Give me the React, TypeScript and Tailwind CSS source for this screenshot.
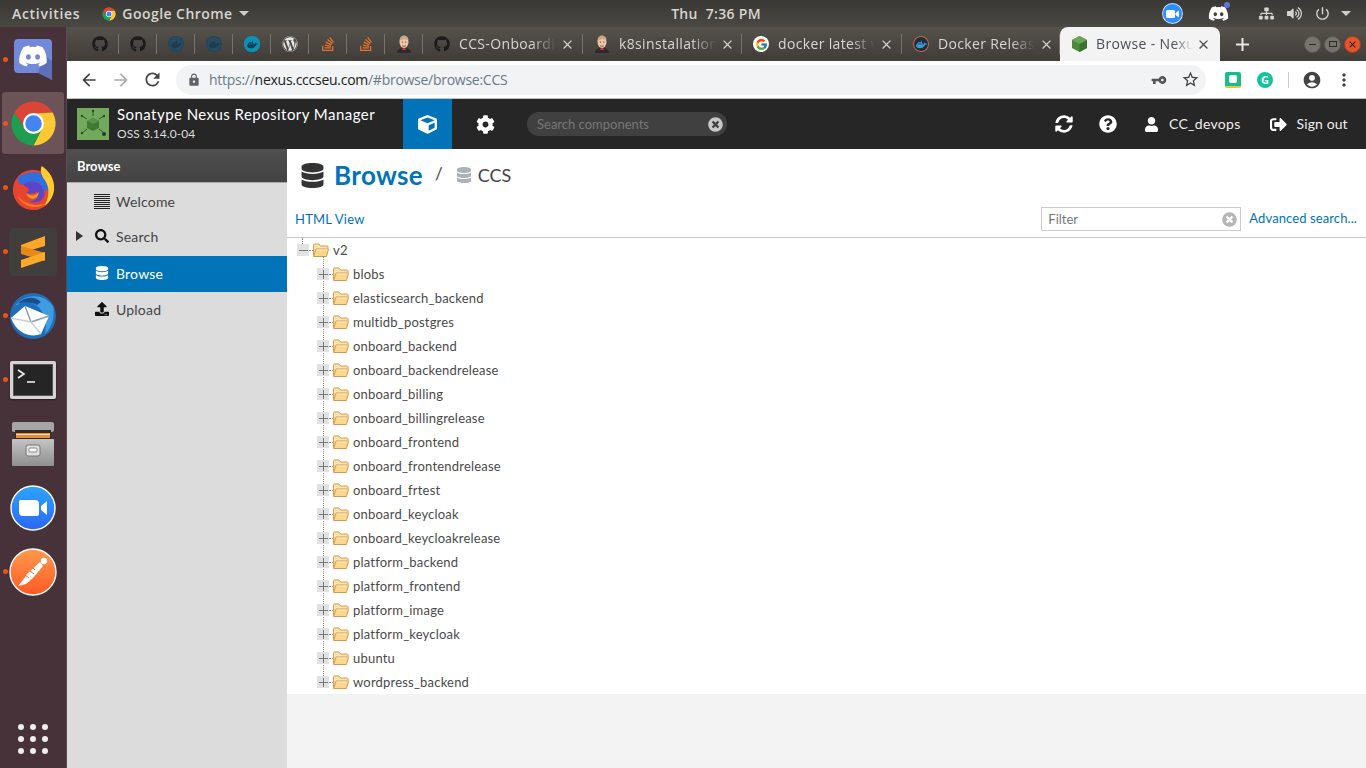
import type { ReactNode } from 'react'
import {
  FaCog,
  FaCube,
  FaDatabase,
  FaDiscord,
  FaDocker,
  FaGithub,
  FaQuestionCircle,
  FaSearch,
  FaSignOutAlt,
  FaSitemap,
  FaStackOverflow,
  FaSyncAlt,
  FaTimesCircle,
  FaUpload,
  FaUser,
  FaVolumeUp,
  FaWordpress
} from 'react-icons/fa'
import { FcGoogle } from 'react-icons/fc'
import {
  MdAccountCircle,
  MdArrowBack,
  MdArrowForward,
  MdClose,
  MdLock,
  MdMoreVert,
  MdPowerSettingsNew,
  MdRefresh,
  MdStarBorder,
  MdVpnKey
} from 'react-icons/md'

const repos = [
  'blobs',
  'elasticsearch_backend',
  'multidb_postgres',
  'onboard_backend',
  'onboard_backendrelease',
  'onboard_billing',
  'onboard_billingrelease',
  'onboard_frontend',
  'onboard_frontendrelease',
  'onboard_frtest',
  'onboard_keycloak',
  'onboard_keycloakrelease',
  'platform_backend',
  'platform_frontend',
  'platform_image',
  'platform_keycloak',
  'ubuntu',
  'wordpress_backend'
]

const uiFont = "font-['Open_Sans','Noto_Sans',sans-serif]"
const nexusFont = "font-['Lato','Open_Sans',sans-serif]"

const ChromeLogo = ({ size }: { size: number }) => (
  <svg width={size} height={size} viewBox="0 0 48 48">
    <path d="M6.7 14A20 20 0 0 1 41.3 14L24 15A9 9 0 0 0 16.2 28.5Z" fill="#db4437" />
    <path d="M41.3 14A20 20 0 0 1 24 44L31.8 28.5A9 9 0 0 0 24 15Z" fill="#fcc934" />
    <path d="M24 44A20 20 0 0 1 6.7 14L16.2 28.5A9 9 0 0 0 31.8 28.5Z" fill="#1e9e50" />
    <circle cx="24" cy="24" r="9.5" fill="#fff" />
    <circle cx="24" cy="24" r="7.5" fill="#4285f4" />
  </svg>
)

const DiscordTile = () => (
  <div className="relative -mt-[2px]">
    <svg width="38" height="41" viewBox="0 0 38 41" className="block">
      <path d="M4 0H34a4 4 0 0 1 4 4V41L29 34H4a4 4 0 0 1-4-4V4a4 4 0 0 1 4-4Z" fill="#7289da" />
      <path d="M24 34L38 41V22L30 16Z" fill="#5c6fb8" />
    </svg>
    <FaDiscord className="absolute left-[4px] top-[2px] text-[30px] text-white" />
  </div>
)

const FirefoxLogo = () => (
  <svg width="46" height="46" viewBox="0 0 48 48">
    <circle cx="24" cy="26" r="21" fill="#e8452f" />
    <path d="M8 14C16 5 34 5 42 16C46 24 40 28 34 26C32 18 24 14 14 20C11 22 9 20 8 14Z" fill="#2f6fe0" />
    <path d="M33 1C41 6 47 15 46 26C45 34 40 40 36 42C42 32 41 22 36 15C33 11 31 6 33 1Z" fill="#ffcb2e" />
    <path d="M14 20C22 14 34 18 36 28C37 36 28 42 20 38C28 38 31 33 28 28C25 30 20 31 17 29C20 28 20 26 19 24C17 23 15 22 14 20Z" fill="#5a46c9" />
    <path d="M17 29C20 33 27 33 30 28C30 33 26 36 22 35C19 34 18 32 17 29Z" fill="#ff9a1f" />
    <path d="M8 32C12 43 28 48 38 40C28 44 15 41 8 32Z" fill="#ff7a18" />
  </svg>
)

const SublimeLogo = () => (
  <div className="w-12 h-12 rounded-sm bg-[#403f3d] flex items-center justify-center">
    <svg width="26" height="32" viewBox="0 0 26 32">
      <path d="M25 0V10L1 17V9Z" fill="#ffa726" />
      <path d="M1 10L25 17V25L1 18Z" fill="#e58a17" />
      <path d="M25 16V24L1 32V24Z" fill="#ffa726" />
    </svg>
  </div>
)

const ThunderbirdLogo = () => (
  <svg width="48" height="48" viewBox="0 0 48 48">
    <circle cx="24" cy="24" r="23" fill="#1f6fb8" />
    <path d="M6 14C14 2 34 0 44 14C46 24 44 34 36 42C38 30 36 20 28 14C20 8 12 10 6 14Z" fill="#3f9ce0" />
    <path d="M8 12C16 4 26 4 32 10L28 13C22 10 14 10 8 12Z" fill="#1a4f92" />
    <path d="M2 26L16 14L40 24L32 42C22 46 8 42 2 26Z" fill="#fff" />
    <path d="M16 14L22 30L40 24" fill="none" stroke="#8f9bb3" strokeWidth="1.5" />
    <path d="M2 26L22 30L32 42" fill="none" stroke="#c7cedb" strokeWidth="1.5" />
  </svg>
)

const TerminalLogo = () => (
  <div className="w-[46px] h-[38px] bg-[#d4d4d4] rounded-[2px] p-[3px] shadow-[0_1px_2px_rgba(0,0,0,0.5)]">
    <div className="w-full h-full bg-[#252525] border border-[#555]">
      <svg width="24" height="16" viewBox="0 0 24 16" className="mt-[4px] ml-[3px]">
        <path d="M1 1L7 5L1 9" fill="none" stroke="#eee" strokeWidth="1.6" />
        <path d="M10 13H18" stroke="#eee" strokeWidth="1.6" />
      </svg>
    </div>
  </div>
)

const FilesLogo = () => (
  <svg width="42" height="44" viewBox="0 0 42 44">
    <defs>
      <linearGradient id="cabinet" x1="0" y1="0" x2="0" y2="1">
        <stop offset="0" stopColor="#c4c4c4" />
        <stop offset="1" stopColor="#8f8f8f" />
      </linearGradient>
    </defs>
    <rect x="0" y="0" width="42" height="10" rx="2" fill="#a6a6a6" />
    <rect x="3" y="8" width="36" height="12" fill="#2c2c2c" />
    <rect x="4" y="11" width="34" height="5" fill="#ee8b36" />
    <rect x="4" y="12" width="34" height="1" fill="#f6e0c0" />
    <rect x="0" y="17" width="42" height="27" rx="1" fill="url(#cabinet)" />
    <rect x="14" y="23" width="14" height="11" rx="2" fill="#e0e0e0" stroke="#777" />
    <rect x="17" y="26" width="8" height="4" rx="1" fill="#fafafa" stroke="#666" strokeWidth="0.7" />
  </svg>
)

const ZoomLogo = () => (
  <svg width="46" height="46" viewBox="0 0 46 46">
    <defs>
      <linearGradient id="zoomFill" x1="0" y1="0" x2="0" y2="1">
        <stop offset="0" stopColor="#2da5ff" />
        <stop offset="1" stopColor="#2a67f5" />
      </linearGradient>
    </defs>
    <circle cx="23" cy="23" r="22" fill="url(#zoomFill)" stroke="#fff" strokeWidth="1.4" />
    <path d="M9 17a2 2 0 0 1 2-2h14a4 4 0 0 1 4 4v10a2 2 0 0 1-2 2H13a4 4 0 0 1-4-4Z" fill="#fff" />
    <path d="M31 21L37 16V30L31 25Z" fill="#fff" />
  </svg>
)

const PostmanLogo = () => (
  <svg width="48" height="48" viewBox="0 0 48 48">
    <defs>
      <linearGradient id="postmanFill" x1="0" y1="0" x2="0" y2="1">
        <stop offset="0" stopColor="#ff9a4d" />
        <stop offset="1" stopColor="#ff5a24" />
      </linearGradient>
    </defs>
    <circle cx="24" cy="24" r="23" fill="url(#postmanFill)" stroke="#fff" strokeWidth="1.4" />
    <circle cx="35" cy="13" r="3.2" fill="#fff" />
    <path d="M31 14L34 18L24 30L18 26Z" fill="#fff" />
    <path d="M18 26L24 30L17 36L9 38L14 32Z" fill="#fff" />
    <path d="M22 18L26 22M25 26L21 23M20 30L16 27" stroke="#ff6a2c" strokeWidth="1" />
  </svg>
)

const JenkinsFace = () => (
  <svg width="16" height="18" viewBox="0 0 16 18">
    <path d="M1 18C1 14 4 13 8 13C12 13 15 14 15 18Z" fill="#2b2b33" />
    <path d="M7 13L9 13L10 15L6 15Z" fill="#d33833" />
    <ellipse cx="8" cy="7" rx="4.5" ry="6" fill="#eec6a5" />
    <path d="M3.5 6C3.5 2 6 0.5 8 0.5C10 0.5 12.5 2 12.5 5C10 4 7 3.5 3.5 6Z" fill="#c9a98d" />
    <path d="M6 10.5C7 11.5 9 11.5 10 10.5" stroke="#6b4b3a" fill="none" strokeWidth="0.8" />
    <circle cx="6.4" cy="7" r="0.6" fill="#333" />
    <circle cx="9.8" cy="7" r="0.6" fill="#333" />
  </svg>
)

const DockerBadge = ({ ring, bg, fg }: { ring: string; bg: string; fg: string }) => (
  <span
    className="w-4 h-4 rounded-full flex items-center justify-center"
    style={{ background: bg, boxShadow: `inset 0 0 0 1px ${ring}` }}
  >
    <FaDocker className="text-[11px]" style={{ color: fg }} />
  </span>
)

const NexusCube = () => (
  <svg width="15" height="16" viewBox="0 0 15 16">
    <path d="M7.5 0L15 4V12L7.5 16L0 12V4Z" fill="#4d8a3d" />
    <path d="M7.5 0L15 4L7.5 8L0 4Z" fill="#6ba556" />
    <path d="M7.5 8L15 4V12L7.5 16Z" fill="#3c7330" />
  </svg>
)

const NexusLogo = () => (
  <svg width="32" height="32" viewBox="0 0 32 32" className="ml-[10px] shrink-0">
    <rect width="32" height="32" fill="#72a95c" />
    <path d="M16 10L22 13V20L16 23L10 20V13Z" fill="#3f7a35" />
    <path d="M16 10L22 13L16 16L10 13Z" fill="#56934a" />
    <path d="M5 8L10 11M27 8L22 11M5 25L10 21M27 25L22 21M16 3V8" stroke="#2f5a28" strokeWidth="1" />
    <circle cx="5" cy="8" r="1.2" fill="#2f4a2a" />
    <circle cx="27" cy="8" r="1.2" fill="#2f4a2a" />
    <circle cx="5" cy="25" r="1.2" fill="#2f4a2a" />
    <circle cx="27" cy="26" r="2" fill="#2a3a28" />
    <circle cx="16" cy="3" r="1.2" fill="#2f4a2a" />
  </svg>
)

const FolderIcon = () => (
  <svg width="16" height="14" viewBox="0 0 16 14" className="shrink-0">
    <path d="M0.5 12.5V2a1 1 0 0 1 1-1H6l1.5 2H14a1 1 0 0 1 1 1v1.5" fill="#fbe3b0" stroke="#d89a4a" />
    <path d="M0.5 13.5L3 6H15.5L13.5 13.5Z" fill="#fcd68d" stroke="#d89a4a" strokeLinejoin="round" />
    <path d="M3.6 7H14.4" stroke="#fff0cf" />
  </svg>
)

const Expander = ({ open }: { open?: boolean }) => (
  <span className="relative w-[12px] h-[12px] bg-[#e0e2e4] flex items-center justify-center shrink-0">
    <span className="absolute w-[9px] h-px bg-[#777]" />
    {!open && <span className="absolute h-[9px] w-px bg-[#777]" />}
  </span>
)

const TreeRow = ({ label, open }: { label: string; open?: boolean }) => (
  <div className="h-6 flex items-center text-[13px] text-[#4a4a4a]">
    <Expander open={open} />
    <span className="w-[4px] border-t border-dotted border-[#888]" />
    <FolderIcon />
    <span className="ml-[4px] mt-[1px] tracking-[0.2px]">{label}</span>
  </div>
)

const DockItem = ({ children, dot, active }: { children: ReactNode; dot?: boolean; active?: boolean }) => (
  <div className="relative h-16 flex items-center justify-center">
    {active && <div className="absolute left-[2px] top-0 w-[62px] h-[62px] rounded-[3px] bg-[#6b5357]" />}
    {dot && <span className="absolute left-[3px] top-[29px] w-[5px] h-[5px] rounded-full bg-[#e9541f]" />}
    <div className="relative">{children}</div>
  </div>
)

const PinnedTab = ({ children }: { children: ReactNode }) => (
  <div className="w-[38px] h-[34px] flex items-center justify-center relative">
    {children}
    <span className="absolute right-0 top-[7px] h-5 w-px bg-[#77746e]" />
  </div>
)

const Tab = ({ icon, title, width }: { icon: ReactNode; title: string; width: number }) => (
  <div className="h-[34px] flex items-center relative shrink-0 pl-[11px]" style={{ width }}>
    <span className="w-4 flex justify-center shrink-0">{icon}</span>
    <span className="ml-[9px] -mt-[1px] w-[97px] overflow-hidden whitespace-nowrap text-[14px] tracking-[0.35px] text-[#d8d6d2] [mask-image:linear-gradient(to_right,black_75%,transparent)]">
      {title}
    </span>
    <MdClose className="ml-[4px] text-[15px] text-[#d0cec9]" />
    <span className="absolute right-0 top-[7px] h-5 w-px bg-[#77746e]" />
  </div>
)

const NavRow = ({ icon, label, active, arrow }: { icon: ReactNode; label: string; active?: boolean; arrow?: boolean }) => (
  <div className={`h-9 flex items-center text-[14px] tracking-[0.2px] ${active ? 'bg-[#0073b9] text-white' : 'text-[#444]'}`}>
    <span className={`w-[22px] pl-[9px] flex ${arrow ? '-mt-[4px]' : ''}`}>
      {arrow && <span className="w-0 h-0 border-y-[5px] border-y-transparent border-l-[7px] border-l-[#333]" />}
    </span>
    <span className={`w-[27px] pr-[1px] flex justify-center ${arrow ? '-mt-[4px]' : '-mt-[2px]'}`}>{icon}</span>
    <span className={arrow ? '-mt-[4px]' : '-mt-[2px]'}>{label}</span>
  </div>
)

const App = () => {
  return (
    <div className={`w-full h-screen flex flex-col overflow-hidden bg-[#47323a] ${uiFont}`}>
      {/* gnome top bar */}
      <div className="h-[27px] shrink-0 flex items-center justify-between bg-gradient-to-b from-[#3a3834] to-[#4a4843] text-[14px] font-semibold text-[#d6d5d0]">
        <div className="flex items-center pl-3 w-[500px]">
          <span className="tracking-[0.7px]">Activities</span>
          <span className="ml-[21px]">
            <ChromeLogo size={16} />
          </span>
          <span className="ml-[5px] tracking-[0.45px]">Google Chrome</span>
          <span className="ml-[6px] w-0 h-0 border-x-[5px] border-x-transparent border-t-[5px] border-t-[#cfcdc8]" />
        </div>
        <div className="flex gap-2 ml-[66px] tracking-[0.3px]">
          <span>Thu</span>
          <span>7:36 PM</span>
        </div>
        <div className="flex items-center justify-end w-[500px] pr-[15px] text-[#d6d5d0]">
          <span className="w-[21px] h-[21px] rounded-full bg-[#2d8cff] border border-white/70 flex items-center justify-center">
            <svg width="13" height="8" viewBox="0 0 13 8">
              <rect width="9" height="8" rx="1.5" fill="#fff" />
              <path d="M9.5 3L13 0.5V7.5L9.5 5Z" fill="#fff" />
            </svg>
          </span>
          <span className="relative ml-[25px]">
            <FaDiscord className="text-[21px] text-white" />
            <span className="absolute -right-[1px] -top-[1px] w-[6px] h-[6px] rounded-full bg-[#5a78d6]" />
          </span>
          <FaSitemap className="ml-[30px] text-[15px]" />
          <FaVolumeUp className="ml-[13px] text-[15px]" />
          <MdPowerSettingsNew className="ml-[12px] text-[17px]" />
          <span className="ml-[10px] w-0 h-0 border-x-[5px] border-x-transparent border-t-[5px] border-t-[#cfcdc8]" />
        </div>
      </div>

      <div className="flex-1 flex min-h-0">
        {/* launcher */}
        <div className="w-[67px] shrink-0 flex flex-col pt-px bg-[#47323a] border-r border-[#5c4a50]">
          <DockItem dot>
            <DiscordTile />
          </DockItem>
          <DockItem dot active>
            <div className="-mt-[2px]">
              <ChromeLogo size={53} />
            </div>
          </DockItem>
          <DockItem dot>
            <FirefoxLogo />
          </DockItem>
          <DockItem dot>
            <SublimeLogo />
          </DockItem>
          <DockItem dot>
            <ThunderbirdLogo />
          </DockItem>
          <DockItem dot>
            <TerminalLogo />
          </DockItem>
          <DockItem>
            <FilesLogo />
          </DockItem>
          <DockItem>
            <ZoomLogo />
          </DockItem>
          <DockItem dot>
            <PostmanLogo />
          </DockItem>
          <div className="mt-auto mb-[14px] ml-[18px] grid grid-cols-3 w-[30px] gap-x-[6px] gap-y-[6px]">
            {Array.from({ length: 9 }).map((_, i) => (
              <span key={i} className="w-[6px] h-[6px] rounded-full bg-[#eeeeee]" />
            ))}
          </div>
        </div>

        {/* chrome window */}
        <div className="flex-1 min-w-0 flex flex-col bg-[#f3f3f3]">
          <div className="h-[34px] shrink-0 flex items-center pl-[14px] bg-gradient-to-b from-[#55524c] to-[#403d39]">
            <PinnedTab><FaGithub className="text-[16px] text-[#1b1b1b]" /></PinnedTab>
            <PinnedTab><FaGithub className="text-[16px] text-[#1b1b1b]" /></PinnedTab>
            <PinnedTab><DockerBadge ring="#21465e" bg="#2a4a5e" fg="#1d3a4e" /></PinnedTab>
            <PinnedTab><DockerBadge ring="#21465e" bg="#2a4a5e" fg="#1d3a4e" /></PinnedTab>
            <PinnedTab><DockerBadge ring="#0c92b5" bg="#0c92b5" fg="#063f52" /></PinnedTab>
            <PinnedTab><FaWordpress className="text-[16px] text-[#e6e6e6]" /></PinnedTab>
            <PinnedTab><FaStackOverflow className="text-[16px] text-[#e8702a]" /></PinnedTab>
            <PinnedTab><FaStackOverflow className="text-[16px] text-[#e8702a]" /></PinnedTab>
            <PinnedTab><JenkinsFace /></PinnedTab>
            <Tab width={160} title="CCS-Onboarding" icon={<FaGithub className="text-[16px] text-[#1b1b1b]" />} />
            <Tab width={159} title="k8sinstallation" icon={<JenkinsFace />} />
            <Tab width={160} title="docker latest v" icon={<span className="w-4 h-4 rounded-full bg-white flex items-center justify-center"><FcGoogle className="text-[13px]" /></span>} />
            <Tab width={158} title="Docker Release" icon={<DockerBadge ring="#d9663f" bg="#1c2f3a" fg="#3a9bd9" />} />
            <div className="relative w-[160px] h-[34px] shrink-0 pl-[12px] rounded-t-[8px] bg-[#f3f3f3] flex items-center">
              <NexusCube />
              <span className="ml-[9px] -mt-[1px] w-[97px] overflow-hidden whitespace-nowrap text-[14px] tracking-[0.35px] text-[#4a4f57] [mask-image:linear-gradient(to_right,black_80%,transparent)]">
                Browse - Nexus
              </span>
              <MdClose className="ml-[3px] text-[15px] text-[#4a4a4a]" />
            </div>
            <svg width="15" height="15" viewBox="0 0 15 15" className="ml-[15px]">
              <path d="M7.5 1V14M1 7.5H14" stroke="#e8e6e2" strokeWidth="2" />
            </svg>
            <div className="ml-auto pr-[5px] flex items-center gap-[3px]">
              <span className="w-[17px] h-[17px] rounded-full bg-[#77746e] border border-[#5a5853] flex items-center justify-center">
                <span className="w-[7px] h-px bg-[#2e2c29]" />
              </span>
              <span className="w-[17px] h-[17px] rounded-full bg-[#77746e] border border-[#5a5853] flex items-center justify-center">
                <span className="w-[8px] h-[6px] border border-[#2e2c29]" />
              </span>
              <span className="w-[17px] h-[17px] rounded-full bg-[#e2562c] border border-[#a83c1c] flex items-center justify-center">
                <MdClose className="text-[11px] text-[#3c1a10]" />
              </span>
            </div>
          </div>

          {/* address bar */}
          <div className="h-[38px] shrink-0 flex items-center bg-white border-b border-[#c4c4c4] text-[#5f6368]">
            <MdArrowBack className="ml-[12px] text-[20px] text-[#444]" />
            <MdArrowForward className="ml-[12px] text-[20px] text-[#aaa]" />
            <MdRefresh className="ml-[11px] text-[21px] text-[#444]" />
            <div className="ml-[13px] w-[1030px] h-[30px] rounded-full bg-[#f1f3f4] flex items-center pl-[11px]">
              <MdLock className="text-[14px] text-[#5f6368]" />
              <span className="ml-[8px] text-[14px] whitespace-nowrap tracking-[-0.27px] text-[#6b7a88]">
                https://<span className="text-[#222]">nexus.cccseu.com</span>/#browse/browse:CCS
              </span>
              <MdVpnKey className="ml-auto text-[16px] -scale-x-100 text-[#555]" />
              <MdStarBorder className="ml-[14px] mr-[6px] text-[19px] text-[#444]" />
            </div>
            <span className="ml-[19px] w-4 h-4 rounded-[2px] bg-[#18bd8f] flex items-center justify-center border-b-2 border-[#f2c230]">
              <span className="w-2 h-2 rounded-[2px] bg-white" />
            </span>
            <span className="ml-[16px] w-4 h-4 rounded-full bg-[#15c39a] flex items-center justify-center text-[11px] font-bold text-white leading-none">
              G
            </span>
            <span className="ml-[15px] w-px h-4 bg-[#ccc]" />
            <MdAccountCircle className="ml-[13px] text-[20px] text-[#444]" />
            <MdMoreVert className="ml-[12px] text-[20px] text-[#444]" />
          </div>

          {/* nexus header */}
          <div className={`h-[50px] shrink-0 flex items-center bg-[#262626] text-white ${nexusFont}`}>
            <NexusLogo />
            <div className="ml-2 w-[286px] flex flex-col">
              <span className="text-[15px] leading-[20px] -mt-[2px] tracking-[0.45px]">Sonatype Nexus Repository Manager</span>
              <span className="text-[12px] leading-[18px] mt-[1px] tracking-[0.05px] text-[#ddd]">OSS 3.14.0-04</span>
            </div>
            <div className="w-[49px] h-full bg-[#0073b9] flex items-center justify-center">
              <FaCube className="text-[19px]" />
            </div>
            <FaCog className="ml-6 text-[19px]" />
            <div className="ml-[32px] w-[200px] h-6 rounded-full bg-[#404040] flex items-center pl-[10px] pr-[4px] text-[13px] text-[#777]">
              <span className="mt-[1px]">Search components</span>
              <FaTimesCircle className="ml-auto text-[15px] text-[#c8c8c8]" />
            </div>
            <FaSyncAlt className="ml-[328px] text-[18px]" />
            <FaQuestionCircle className="ml-[26px] text-[18px]" />
            <FaUser className="ml-[27px] text-[15px]" />
            <span className="ml-[10px] -mt-[2px] text-[14px] tracking-[0.3px] text-[#eee]">CC_devops</span>
            <FaSignOutAlt className="ml-[29px] text-[17px]" />
            <span className="ml-[10px] -mt-[2px] text-[14px] tracking-[0.1px] text-[#eee]">Sign out</span>
          </div>

          <div className={`flex-1 min-h-0 flex ${nexusFont}`}>
            {/* nexus sidebar */}
            <div className="w-[220px] shrink-0 bg-[#dcdcdc]">
              <div className="h-[34px] flex items-center pl-[10px] pt-[2px] text-[13px] font-bold text-white bg-gradient-to-b from-[#4f4f4f] to-[#434343] border-b border-[#aaa]">
                Browse
              </div>
              <div className="pt-px">
                <NavRow
                  label="Welcome"
                  icon={
                    <span className="flex flex-col gap-[1px] w-[16px]">
                      {[0, 1, 2, 3, 4, 5, 6, 7].map((i) => (
                        <span key={i} className="h-px bg-[#222]" />
                      ))}
                    </span>
                  }
                />
                <NavRow arrow label="Search" icon={<FaSearch className="text-[14px] text-[#111]" />} />
                <NavRow active label="Browse" icon={<FaDatabase className="text-[14px] text-white" />} />
                <NavRow label="Upload" icon={<FaUpload className="text-[14px] text-[#111]" />} />
              </div>
            </div>

            {/* content */}
            <div className="flex-1 min-w-0 flex flex-col">
              <div className="bg-white">
                <div className="h-[52px] flex items-center pl-[13px]">
                  <FaDatabase className="text-[25px] text-[#333]" />
                  <span className="ml-[9px] text-[26px] font-bold text-[#0073b9] tracking-[0.35px]">Browse</span>
                  <span className="ml-[12px] -mt-[3px] text-[17px] text-[#444]">/</span>
                  <FaDatabase className="ml-[13px] text-[16px] text-[#a9b2b8]" />
                  <span className="ml-[6px] text-[18px] text-[#444]">CCS</span>
                </div>
                <div className="h-[37px] flex items-center pl-2 pr-[9px] border-b border-[#c8c8c8]">
                  <span className="mt-[1px] text-[13px] tracking-[0.2px] text-[#0073b9]">HTML View</span>
                  <div className="ml-auto w-[200px] h-6 border border-[#ccc] flex items-center pl-[6px] pr-[3px] text-[13px] text-[#777]">
                    <span className="mt-[1px]">Filter</span>
                    <FaTimesCircle className="ml-auto text-[15px] text-[#b5b5b5]" />
                  </div>
                  <span className="ml-2 -mt-[1px] text-[13px] tracking-[0.1px] text-[#0073b9]">Advanced search...</span>
                </div>
                <div className="relative pl-[10px]">
                  <span className="absolute left-[15px] top-0 h-[6px] border-l border-dotted border-[#888]" />
                  <TreeRow open label="v2" />
                  <div className="relative pl-[20px]">
                    <span className="absolute left-[26px] -top-[6px] bottom-[12px] border-l border-dotted border-[#888]" />
                    <div className="relative">
                      {repos.map((repo) => (
                        <TreeRow key={repo} label={repo} />
                      ))}
                    </div>
                  </div>
                </div>
              </div>
              <div className="flex-1 bg-[#f3f3f3]" />
            </div>
          </div>
        </div>
      </div>
    </div>
  )
}

export default App
